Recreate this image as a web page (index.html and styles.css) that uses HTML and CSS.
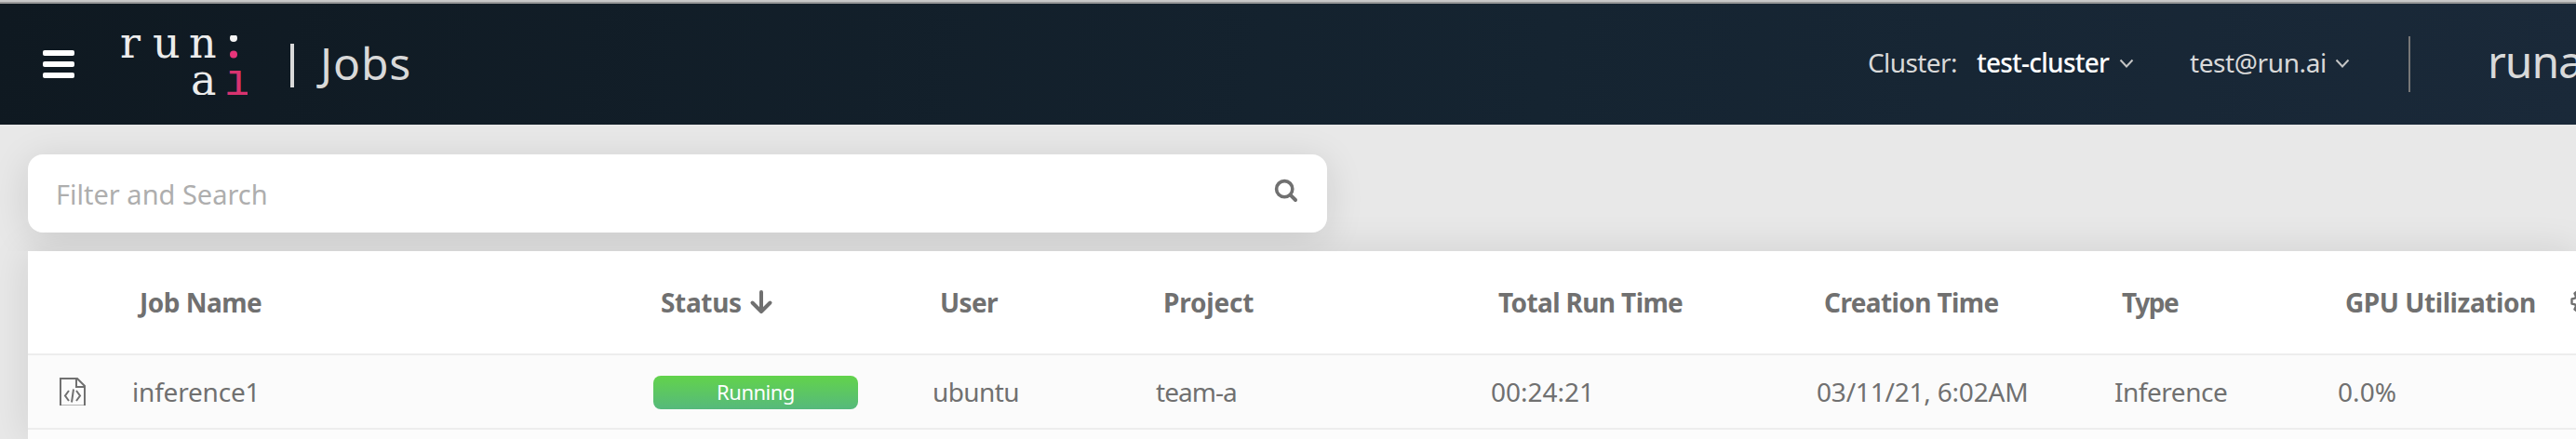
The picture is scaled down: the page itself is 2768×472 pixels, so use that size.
FILE: index.html
```html
<!DOCTYPE html>
<html lang="en">
<head>
<meta charset="utf-8">
<title>Jobs</title>
<link rel="stylesheet" href="styles.css">
</head>
<body>
<header class="nav">
  <div class="menu"><i></i><i></i><i></i></div>
  <svg class="logo" width="136" height="64" viewBox="0 0 136 64">
    <g class="logo-light">
      <text x="-1" y="24">r</text><text x="34" y="24">u</text><text x="73" y="24">n</text>
      <text x="75" y="64">a</text>
    </g>
    <circle cx="121" cy="3" r="4" fill="#f4f4f4"/><circle cx="121" cy="20.5" r="4" fill="#e8357a"/>
    <text class="logo-pink" x="111" y="64">ı</text>
  </svg>
  <div class="bar"></div>
  <h1 class="title">Jobs</h1>
  <div class="account">
    <span class="cluster-label">Cluster:</span>
    <span class="cluster-name">test-cluster</span>
    <svg class="chev" width="16" height="10" viewBox="0 0 16 10"><path d="M1.500 1.500 8 8.500 14.500 1.500"/></svg>
    <span class="email">test@run.ai</span>
    <svg class="chev" width="16" height="10" viewBox="0 0 16 10"><path d="M1.500 1.500 8 8.500 14.500 1.500"/></svg>
    <div class="divider"></div>
    <span class="org">runa</span>
  </div>
</header>
<main class="page">
  <div class="search">
    <span class="placeholder">Filter and Search</span>
    <svg width="26" height="26" viewBox="0 0 26 26" fill="none" stroke="#707070" stroke-linecap="round"><circle cx="11.200" cy="11.200" r="8.600" stroke-width="3.600"/><path d="M17.800 17.800 23 23" stroke-width="4"/></svg>
  </div>
  <section class="table">
    <div class="row head">
      <span></span>
      <span class="h-job">Job Name</span>
      <span class="h-status">Status<svg class="sort" width="26" height="26" viewBox="0 0 26 26"><path d="M13 2V23M3.500 13.500 13 23 22.500 13.500"/></svg></span>
      <span class="h-user">User</span>
      <span class="h-project">Project</span>
      <span class="h-run">Total Run Time</span>
      <span class="h-created">Creation Time</span>
      <span class="h-type">Type</span>
      <span class="h-gpu">GPU Utilization</span>
      <svg class="gear" width="26" height="26" viewBox="0 0 26 26"><g transform="rotate(90 13 13)"><path d="M10.500 1.500h5l.8 3.500 2 1 3.300-1.500 3 4-2.300 2.800v2.500l2.300 2.700-3 4-3.300-1.500-2 1-.8 3.500h-5l-.8-3.500-2-1-3.300 1.500-3-4 2.300-2.700v-2.500L1.400 8.500l3-4L7.700 6l2-1z"/><circle cx="13" cy="13" r="4.500"/></g></svg>
    </div>
    <div class="row job">
      <svg class="file" width="28" height="30" viewBox="0 0 28 30"><path d="M1 30V1H19L27 9V30M18 1V10H27" stroke-width="2"/><path d="M0 29.500H28" stroke-width="1" opacity=".5"/><path d="M10 14 6 19.500 10 25M18 14 22 19.500 18 25M15 12.500 13 26.500" stroke-width="2"/></svg>
      <span class="c-job">inference1</span>
      <span class="badge">Running</span>
      <span class="c-user">ubuntu</span>
      <span class="c-project">team-a</span>
      <span>00:24:21</span>
      <span class="c-created">03/11/21, 6:02AM</span>
      <span class="c-type">Inference</span>
      <span class="c-gpu">0.0%</span>
    </div>
    <div class="row next"></div>
  </section>
</main>
</body>
</html>
```
FILE: styles.css
```css
* { box-sizing: border-box; }
body {
  margin: 0;
  width: 2768px;
  height: 472px;
  overflow: hidden;
  background: #e8e8e8;
  font: 28px "Noto Sans", "Open Sans", sans-serif;
  color: #707070;
  white-space: nowrap;
}
.nav {
  height: 134px;
  border-top: 2px solid #c8c8c8;
  padding-left: 46px;
  display: flex;
  align-items: center;
  color: #d9d9d9;
  background: linear-gradient(#999, #999) 0 0 / 100% 2px no-repeat, linear-gradient(100deg, #0f1921, #152431 60%, #1a2939);
}
.menu { width: 34px; display: grid; gap: 6px; margin-top: 2px; }
.menu i { height: 6px; border-radius: 2px; background: #fff; }
.logo { margin: 4px 0 0 50px; overflow: hidden; }
.logo text { font: 46px "DejaVu Serif", serif; }
.logo-light { fill: #ececec; }
.logo .logo-pink { fill: #d8336f; font: 48px "Liberation Mono", monospace; }
.bar { width: 4px; height: 47px; margin: 5px 0 0 46px; background: #d9d9d9; }
.title { margin: 0 0 1px 28px; font-size: 48px; font-weight: 400; letter-spacing: .9px; }
.account { margin-left: auto; width: 761px; height: 130px; display: flex; align-items: center; }
.account > * { flex: none; }
.cluster-label { width: 117px; letter-spacing: -.59px; padding-bottom: 2px; }
.cluster-name { width: 153px; color: #fff; font-weight: 500; letter-spacing: -.76px; padding-bottom: 2px; }
.chev { fill: none; stroke: #c4c4c4; stroke-width: 2; }
.email { margin-left: 60px; width: 156px; letter-spacing: -.4px; padding-bottom: 2px; }
.divider { width: 2px; height: 60px; margin: 2px 0 0 63px; background: #777; }
.org { margin-left: 83px; font-size: 48px; font-weight: 400; letter-spacing: -1.05px; padding-bottom: 6px; }
.page { padding: 32px 0 0 30px; }
.search {
  position: relative;
  z-index: 1;
  width: 1396px;
  height: 84px;
  border-radius: 16px;
  padding: 0 31px 0 29px;
  display: flex;
  align-items: center;
  justify-content: space-between;
  background: #fff;
  box-shadow: 0 6px 40px rgba(0,0,0,.12);
  clip-path: inset(-32px -60px -20px -60px);
}
.placeholder { font-size: 29px; color: #aeaeae; letter-spacing: 0; padding-left: 1px; }
.search svg { margin-bottom: 6px; }
.table { margin-top: 20px; height: 202px; background: #fff; box-shadow: 0 0 40px rgba(0,0,0,.11); }
.row {
  display: grid;
  grid-template-columns: 112px 560px 300px 240px 360px 350px 320px 240px 226px;
  align-items: center;
}
.head { grid-template-columns: 120px 560px 300px 240px 360px 350px 320px 240px 241px 26px; height: 110px; font-weight: 700; }
.job { height: 82px; background: #fbfbfb; border: solid #ededed; border-width: 2px 0; }
.next { height: 10px; background: #fcfcfc; }
.h-job { letter-spacing: -.5px; }
.h-status { display: flex; align-items: center; letter-spacing: -.34px; }
.sort { margin-left: 8px; fill: none; stroke: #707070; stroke-width: 4; stroke-linecap: round; stroke-linejoin: round; }
.h-user { letter-spacing: -.65px; }
.h-project { letter-spacing: -.2px; }
.h-run { letter-spacing: -.62px; }
.h-created { letter-spacing: -.6px; }
.h-type { letter-spacing: -1.43px; }
.h-gpu { letter-spacing: -.44px; }
.gear { fill: none; stroke: #707070; stroke-width: 2.4; stroke-linejoin: round; margin-bottom: 2px; }
.file { margin-left: 34px; fill: none; stroke: #707070; stroke-linecap: butt; }
.c-job { letter-spacing: -.2px; }
.badge {
  width: 220px;
  height: 36px;
  border-radius: 8px;
  margin-top: 2px;
  font-size: 22px;
  line-height: 35px;
  text-align: center;
  letter-spacing: -.5px;
  color: #fff;
  background: linear-gradient(#62d34b, #56b97c);
}
.c-user { letter-spacing: -.6px; }
.c-project { letter-spacing: -.96px; }
.c-created { letter-spacing: -.2px; }
.c-type { letter-spacing: -.47px; }
.c-gpu { letter-spacing: .1px; }
```
